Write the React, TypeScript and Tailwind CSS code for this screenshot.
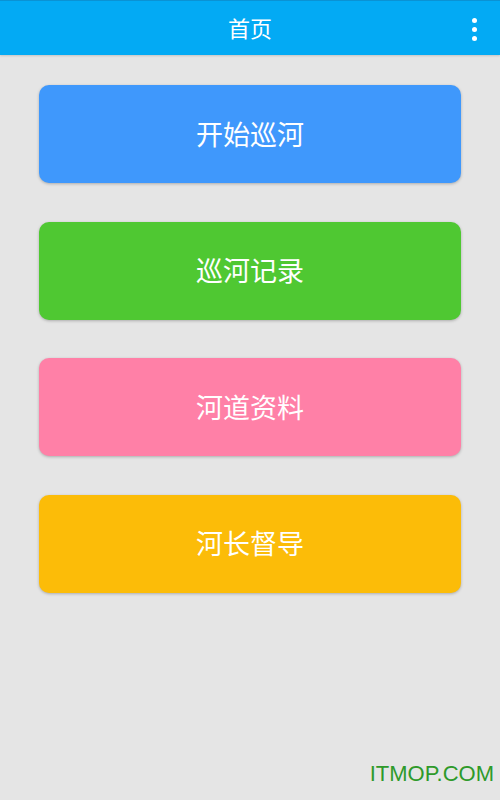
import React from 'react';

const items = [
    { label: '开始巡河', color: 'bg-[#3f98fc]' },
    { label: '巡河记录', color: 'bg-[#4fc832]' },
    { label: '河道资料', color: 'bg-[#ff80a7]' },
    { label: '河长督导', color: 'bg-[#fcbc08]' },
];

const App = () => {
    return (
        <div className="relative w-[500px] h-[800px] bg-[#e5e5e5] flex flex-col overflow-hidden" style={{ fontFamily: '"Noto Sans", "Noto Sans CJK SC", sans-serif' }}>
            <div className="relative h-[55px] bg-[#03aaf4] border-t border-[#0a92d4] flex items-center justify-center shadow-[0_1px_2px_rgba(0,0,0,0.15)]">
                <span className="text-white text-[22px] leading-none">首页</span>
                <div className="absolute right-[23px] top-[17px] flex flex-col gap-[4px]">
                    <span className="block w-[5px] h-[5px] rounded-full bg-white"></span>
                    <span className="block w-[5px] h-[5px] rounded-full bg-white"></span>
                    <span className="block w-[5px] h-[5px] rounded-full bg-white"></span>
                </div>
            </div>

            <div className="flex flex-col gap-[38.5px] px-[39px] pt-[30px]">
                {items.map((item) => (
                    <button
                        key={item.label}
                        className={`h-[98px] w-full rounded-[10px] ${item.color} text-white text-[27px] pt-[2px] flex items-center justify-center shadow-[0_1px_3px_rgba(0,0,0,0.25)]`}
                    >
                        {item.label}
                    </button>
                ))}
            </div>

            <div className="absolute right-[6px] bottom-[15px] text-[#2e9a2a] text-[22px] leading-none" style={{ fontFamily: '"Liberation Sans", Arial, sans-serif' }}>
                ITMOP.COM
            </div>
        </div>
    );
};

export default App;
